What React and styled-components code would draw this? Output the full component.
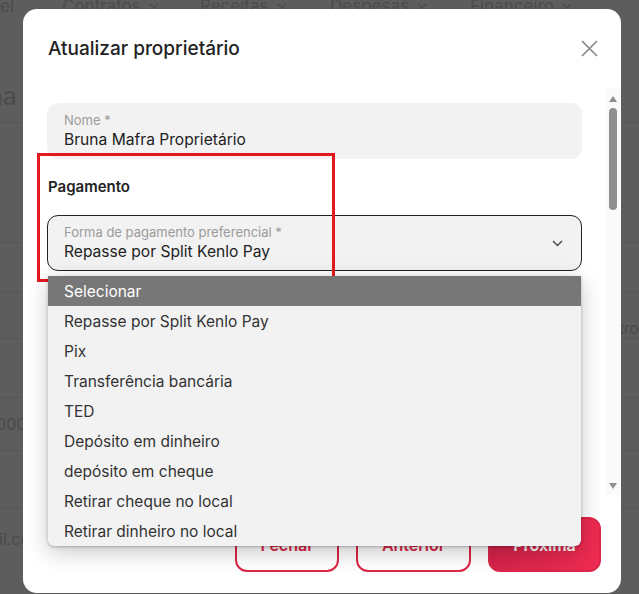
import React from 'react';
import styled, { createGlobalStyle } from 'styled-components';

const GlobalStyle = createGlobalStyle`
  html, body {
    margin: 0;
    padding: 0;
    background: #5d5d5d;
    overflow: hidden;
  }
  * {
    box-sizing: border-box;
  }
`;

const Page = styled.div`
  position: relative;
  width: 639px;
  height: 594px;
  overflow: hidden;
  background: #5d5d5d;
  font-family: Inter, "Noto Sans", sans-serif;
  color: #4b4b4b;
`;

const Nav = styled.div`
  display: flex;
  align-items: center;
  height: 24px;
  margin-top: -6px;
  margin-left: -10px;
  font-size: 17px;
`;

const NavItem = styled.div`
  display: flex;
  align-items: center;
  gap: 8px;
  width: ${(p) => (p.w ? `${p.w}px` : 'auto')};
`;

const PageTitle = styled.div`
  margin-top: 66px;
  margin-left: -12px;
  font-size: 25px;
  line-height: 24px;
  height: 38px;
`;

const Row = styled.div`
  display: flex;
  align-items: ${(p) => p.align || 'center'};
  justify-content: space-between;
  height: ${(p) => p.h}px;
  border-top: 1px solid #555;
  font-size: 16px;
`;

const RowText = styled.span`
  margin-left: ${(p) => p.ml || 0}px;
`;

const Modal = styled.div`
  position: absolute;
  left: 23px;
  top: 9px;
  width: 598px;
  height: 584px;
  background: #fff;
  border-radius: 14px;
  display: flex;
  flex-direction: column;
  color: #222;
`;

const Header = styled.div`
  display: flex;
  align-items: center;
  justify-content: space-between;
  height: 79px;
  padding: 0 23px 0 25px;
`;

const Title = styled.h2`
  margin: 0;
  font-size: 19px;
  font-weight: 500;
  color: #222;
`;

const CloseButton = styled.button`
  border: 0;
  background: none;
  padding: 0;
  display: flex;
  cursor: pointer;
`;

const Body = styled.div`
  display: flex;
  height: 407px;
`;

const Content = styled.div`
  flex: 1;
  padding: 15px 24px 0 24px;
`;

const Field = styled.div`
  display: flex;
  flex-direction: column;
  justify-content: center;
  gap: 2px;
  height: 56px;
  padding: 0 16px;
  background: #f2f2f2;
  border-radius: 11px;
  border: ${(p) => (p.outlined ? '1px solid #222' : '1px solid transparent')};
  position: relative;
`;

const FieldLabel = styled.span`
  font-size: 13px;
  line-height: 16px;
  color: #9a9a9a;
`;

const FieldValue = styled.span`
  font-size: 15.6px;
  line-height: 20px;
  color: #222;
`;

const Chevron = styled.svg`
  position: absolute;
  right: 18px;
  top: 24px;
`;

const Section = styled.h3`
  margin: 18px 0 18px 1px;
  font-size: 15px;
  line-height: 20px;
  font-weight: 600;
  color: #222;
`;

const ScrollTrack = styled.div`
  width: 14px;
  margin-right: 1px;
  background: #fafafa;
  display: flex;
  flex-direction: column;
  align-items: center;
  padding-top: 8px;
`;

const Thumb = styled.div`
  width: 8px;
  height: 102px;
  margin-top: 6px;
  border-radius: 4px;
  background: #8f8f8f;
`;

const Spacer = styled.div`
  flex: 1;
`;

const Arrow = styled.div`
  width: 0;
  height: 0;
  border-left: 4px solid transparent;
  border-right: 4px solid transparent;
  ${(p) =>
    p.down
      ? 'border-top: 6px solid #8f8f8f; margin-bottom: 6px;'
      : 'border-bottom: 6px solid #8f8f8f;'}
`;

const Footer = styled.div`
  display: flex;
  justify-content: flex-end;
  gap: 17px;
  padding: 22px 20px 0 0;
`;

const Button = styled.button`
  height: 55px;
  width: ${(p) => p.w}px;
  border-radius: 12px;
  font-family: inherit;
  font-size: 16px;
  font-weight: 600;
  cursor: pointer;
  border: 2px solid #dc2647;
  color: ${(p) => (p.primary ? '#fff' : '#dc2647')};
  background: ${(p) =>
    p.primary ? 'linear-gradient(90deg, #d4234a, #ef2b52)' : '#fff'};
`;

const Highlight = styled.div`
  position: absolute;
  left: 14px;
  top: 144px;
  width: 298px;
  height: 129px;
  border: 3px solid #e3191f;
  pointer-events: none;
`;

const Dropdown = styled.ul`
  position: absolute;
  left: 25px;
  top: 267px;
  width: 533px;
  margin: 0;
  padding: 0;
  list-style: none;
  background: #f2f2f2;
  border-radius: 0 0 6px 6px;
  box-shadow: 0 6px 22px rgba(0, 0, 0, 0.22), 0 1px 3px rgba(0, 0, 0, 0.25);
  overflow: hidden;
`;

const Option = styled.li`
  height: 30px;
  display: flex;
  align-items: center;
  padding-left: 16px;
  font-size: 15.5px;
  color: ${(p) => (p.active ? '#fff' : '#333')};
  background: ${(p) => (p.active ? '#777' : 'transparent')};
`;

const NavChevron = () => (
  <svg width="10" height="6" viewBox="0 0 10 6">
    <path d="M1 1l4 4 4-4" fill="none" stroke="#4b4b4b" strokeWidth="1.4" />
  </svg>
);

const options = [
  'Selecionar',
  'Repasse por Split Kenlo Pay',
  'Pix',
  'Transferência bancária',
  'TED',
  'Depósito em dinheiro',
  'depósito em cheque',
  'Retirar cheque no local',
  'Retirar dinheiro no local'
];

const App = () => {
  return (
    <Page>
      <GlobalStyle />
      <Nav>
        <NavItem w={72}>nel</NavItem>
        <NavItem w={138}>
          Contratos <NavChevron />
        </NavItem>
        <NavItem w={130}>
          Receitas <NavChevron />
        </NavItem>
        <NavItem w={140}>
          Despesas <NavChevron />
        </NavItem>
        <NavItem>
          Financeiro <NavChevron />
        </NavItem>
      </Nav>
      <PageTitle>na Proprietário</PageTitle>
      <Row h={120} />
      <Row h={50} />
      <Row h={46} align="flex-end">
        <span />
        <RowText>Cadastro</RowText>
      </Row>
      <Row h={59} />
      <Row h={53}>
        <RowText ml={-14}>0000</RowText>
      </Row>
      <Row h={58} />
      <Row h={60}>
        <RowText ml={-24}>mail.com</RowText>
      </Row>

      <Modal>
        <Header>
          <Title>Atualizar proprietário</Title>
          <CloseButton aria-label="Fechar">
            <svg width="17" height="17" viewBox="0 0 17 17">
              <path d="M1 1l15 15M16 1L1 16" stroke="#888" strokeWidth="1.7" />
            </svg>
          </CloseButton>
        </Header>

        <Body>
          <Content>
            <Field>
              <FieldLabel>Nome *</FieldLabel>
              <FieldValue>Bruna Mafra Proprietário</FieldValue>
            </Field>

            <Section>Pagamento</Section>

            <Field outlined>
              <FieldLabel>Forma de pagamento preferencial *</FieldLabel>
              <FieldValue>Repasse por Split Kenlo Pay</FieldValue>
              <Chevron width="11" height="7" viewBox="0 0 11 7">
                <path d="M1 1l4.5 4.5L10 1" fill="none" stroke="#444" strokeWidth="1.4" />
              </Chevron>
            </Field>
          </Content>
          <ScrollTrack>
            <Arrow />
            <Thumb />
            <Spacer />
            <Arrow down />
          </ScrollTrack>
        </Body>

        <Footer>
          <Button w={104}>Fechar</Button>
          <Button w={115}>Anterior</Button>
          <Button w={113} primary>
            Próxima
          </Button>
        </Footer>

        <Highlight />

        <Dropdown>
          {options.map((o, i) => (
            <Option key={o} active={i === 0}>
              {o}
            </Option>
          ))}
        </Dropdown>
      </Modal>
    </Page>
  );
};

export default App;
